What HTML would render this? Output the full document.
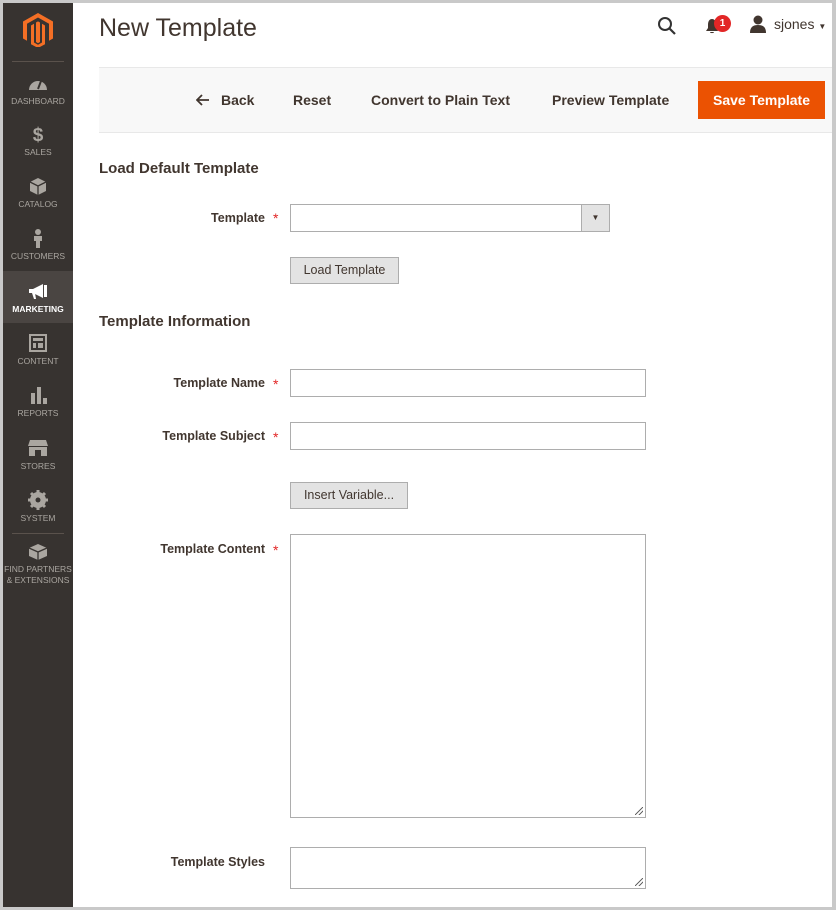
<!DOCTYPE html>
<html><head><meta charset="utf-8"><style>
*{box-sizing:border-box;margin:0;padding:0}
body{width:836px;height:910px;background:#fff;font-family:"Liberation Sans",sans-serif;color:#303030;position:relative;overflow:hidden}
.frame{position:absolute;left:0;top:0;width:836px;height:910px;border-top:3px solid #c9c9c9;border-left:3px solid #c9c9c9;border-right:4px solid #c9c9c9;border-bottom:3px solid #c9c9c9}
.side{position:absolute;left:3px;top:3px;width:70px;height:904px;background:#373330}
.logo{position:absolute;left:20px;top:10px}
.sep{position:absolute;left:9px;width:52px;height:1px;background:#5a524c}
.item{position:absolute;left:0;width:70px;text-align:center;color:#aaa6a0;font-size:8.5px;line-height:11px}
.item svg{display:block;margin:0 auto 3px}
.item.act{background:#4a4542;color:#fff;font-weight:bold}
.abs{position:absolute}
h1{position:absolute;left:99px;top:14px;font-size:25px;font-weight:normal;color:#41362f}
.bar{position:absolute;left:99px;top:67px;width:733px;height:66px;background:#f8f8f8;border-top:1px solid #e8e8e8;border-bottom:1px solid #e8e8e8}
.bt{position:absolute;top:92px;font-size:14px;color:#41362f;font-weight:bold}
.save{position:absolute;left:698px;top:81px;width:127px;height:38px;background:#eb5202;color:#fff;font-size:14px;font-weight:bold;text-align:center;line-height:38px}
h2{position:absolute;left:99px;font-size:15px;font-weight:bold;color:#41362f}
.lbl{position:absolute;width:200px;left:65px;text-align:right;font-size:12.5px;font-weight:bold;color:#41362f}
.req{position:absolute;left:273px;color:#e22626;font-size:14px}
.inp{position:absolute;left:290px;border:1px solid #adadad;background:#fff}
.btn{position:absolute;left:290px;height:27px;background:#e3e3e3;border:1px solid #adadad;font-size:12.5px;color:#41362f;text-align:center;line-height:25px}
.grip{position:absolute;right:2px;bottom:2px;width:8px;height:8px;background:linear-gradient(135deg,transparent 45%,#666 45%,#666 55%,transparent 55%,transparent 70%,#666 70%,#666 80%,transparent 80%)}
</style></head><body>
<div class="frame"></div>
<div class="side">
<svg class="logo" width="30" height="34" viewBox="0 0 30 34"><path d="M15 0L30 8.5V25.5L26 27.8V10.8L15 4.5L4 10.8V27.8L0 25.5V8.5Z" fill="#f46f25"/><path d="M13 9.5L15 8.4L17 9.5V29L15 30.2L13 29Z" fill="#f46f25"/><path d="M8 12.5L11 10.8V29.5L15 31.8L19 29.5V10.8L22 12.5V31.2L15 35L8 31.2Z" fill="#f46f25"/></svg>
<div class="sep" style="top:58px"></div>
<div class="item" style="top:72px"><svg width="20" height="18" viewBox="0 0 20 18"><path d="M1 15A9 9 0 0 1 19 15Z" fill="#aaa6a0"/><path d="M10 14L13 6" stroke="#373330" stroke-width="2"/></svg>DASHBOARD</div>
<div class="item" style="top:121px"><svg width="20" height="20" viewBox="0 0 20 20"><text x="10" y="17" text-anchor="middle" font-size="19" font-weight="bold" fill="#aaa6a0" font-family="Liberation Sans">$</text></svg>SALES</div>
<div class="item" style="top:173px"><svg width="20" height="20" viewBox="0 0 20 20"><path d="M10 2L18 6V15L10 19L2 15V6Z" fill="#aaa6a0"/><path d="M2 6L10 10L18 6M10 10V19" stroke="#373330" stroke-width="1.3" fill="none"/></svg>CATALOG</div>
<div class="item" style="top:225px"><svg width="20" height="20" viewBox="0 0 20 20"><circle cx="10" cy="4" r="3" fill="#aaa6a0"/><path d="M6 8H14V13H12V20H8V13H6Z" fill="#aaa6a0"/></svg>CUSTOMERS</div>
<div class="item act" style="top:268px;height:52px;padding-top:12px"><svg width="22" height="18" viewBox="0 0 22 18"><path d="M2 6H6L16 1V15L6 10H2Z" fill="#fff"/><rect x="17" y="2" width="3" height="12" fill="#fff"/><path d="M5 10L7 16H9L8 10" fill="#fff"/></svg>MARKETING</div>
<div class="item" style="top:330px"><svg width="20" height="20" viewBox="0 0 20 20"><rect x="2" y="2" width="16" height="16" fill="none" stroke="#aaa6a0" stroke-width="2"/><rect x="5" y="5" width="10" height="3" fill="#aaa6a0"/><rect x="5" y="10" width="3" height="5" fill="#aaa6a0"/><rect x="10" y="10" width="5" height="5" fill="#aaa6a0"/></svg>CONTENT</div>
<div class="item" style="top:382px"><svg width="20" height="20" viewBox="0 0 20 20"><rect x="3" y="8" width="4" height="11" fill="#aaa6a0"/><rect x="9" y="2" width="4" height="17" fill="#aaa6a0"/><rect x="15" y="13" width="4" height="6" fill="#aaa6a0"/></svg>REPORTS</div>
<div class="item" style="top:435px"><svg width="22" height="20" viewBox="0 0 22 20"><path d="M3 2H19L21 8H1Z" fill="#aaa6a0"/><rect x="2" y="9" width="18" height="9" fill="#aaa6a0"/><rect x="8" y="12" width="6" height="6" fill="#373330"/></svg>STORES</div>
<div class="item" style="top:487px"><svg width="20" height="20" viewBox="0 0 20 20"><circle cx="10" cy="10" r="6" fill="none" stroke="#aaa6a0" stroke-width="4"/><path d="M10 0V20M0 10H20M3 3L17 17M17 3L3 17" stroke="#aaa6a0" stroke-width="3"/><circle cx="10" cy="10" r="2.5" fill="#373330"/></svg>SYSTEM</div>
<div class="sep" style="top:530px"></div>
<div class="item" style="top:538px"><svg width="22" height="20" viewBox="0 0 22 20"><path d="M11 3L20 7V15L11 19L2 15V7Z" fill="#aaa6a0"/><path d="M2 7L11 11L20 7M11 11V19" stroke="#373330" stroke-width="1.3" fill="none"/></svg>FIND PARTNERS<br>&amp; EXTENSIONS</div>
</div>
<h1>New Template</h1>
<svg class="abs" style="left:657px;top:16px" width="20" height="20" viewBox="0 0 20 20"><circle cx="8" cy="8" r="6" fill="none" stroke="#333" stroke-width="2"/><path d="M12.5 12.5L18 18" stroke="#333" stroke-width="2.2"/></svg>
<svg class="abs" style="left:704px;top:18px" width="16" height="16" viewBox="0 0 16 16"><path d="M8 1C5 1 4 4 4 7V10L2 13H14L12 10V7C12 4 11 1 8 1ZM6 14H10C10 15.5 6 15.5 6 14Z" fill="#41362f"/></svg>
<div class="abs" style="left:714px;top:15px;width:17px;height:17px;border-radius:50%;background:#e22626;color:#fff;font-size:10px;font-weight:bold;text-align:center;line-height:17px">1</div>
<svg class="abs" style="left:749px;top:15px" width="18" height="18" viewBox="0 0 18 18"><circle cx="9" cy="5" r="4.5" fill="#41362f"/><path d="M1 18C1 12 4 10 9 10S17 12 17 18Z" fill="#41362f"/></svg>
<div class="abs" style="left:774px;top:16px;font-size:14px;color:#41362f">sjones <span style="font-size:8px">▼</span></div>
<div class="bar"></div>
<svg class="abs" style="left:196px;top:94px" width="14" height="12" viewBox="0 0 14 12"><path d="M13 6H2M6 1L1 6L6 11" stroke="#41362f" stroke-width="1.8" fill="none"/></svg>
<div class="bt" style="left:221px">Back</div>
<div class="bt" style="left:293px">Reset</div>
<div class="bt" style="left:371px">Convert to Plain Text</div>
<div class="bt" style="left:552px">Preview Template</div>
<div class="save">Save Template</div>

<h2 style="top:160px">Load Default Template</h2>
<div class="lbl" style="top:211px">Template</div><div class="req" style="top:210px">*</div>
<div class="inp" style="top:204px;width:320px;height:28px"><div style="position:absolute;right:0;top:0;width:28px;height:26px;background:#e3e3e3;border-left:1px solid #adadad;font-size:8px;text-align:center;line-height:26px;color:#41362f">▼</div></div>
<div class="btn" style="top:257px;width:109px">Load Template</div>

<h2 style="top:313px">Template Information</h2>
<div class="lbl" style="top:376px">Template Name</div><div class="req" style="top:376px">*</div>
<div class="inp" style="top:369px;width:356px;height:28px"></div>
<div class="lbl" style="top:429px">Template Subject</div><div class="req" style="top:429px">*</div>
<div class="inp" style="top:422px;width:356px;height:28px"></div>
<div class="btn" style="top:482px;width:118px">Insert Variable...</div>
<div class="lbl" style="top:542px">Template Content</div><div class="req" style="top:542px">*</div>
<div class="inp" style="top:534px;width:356px;height:284px"><div class="grip"></div></div>
<div class="lbl" style="top:855px">Template Styles</div>
<div class="inp" style="top:847px;width:356px;height:42px"><div class="grip"></div></div>
</body></html>
